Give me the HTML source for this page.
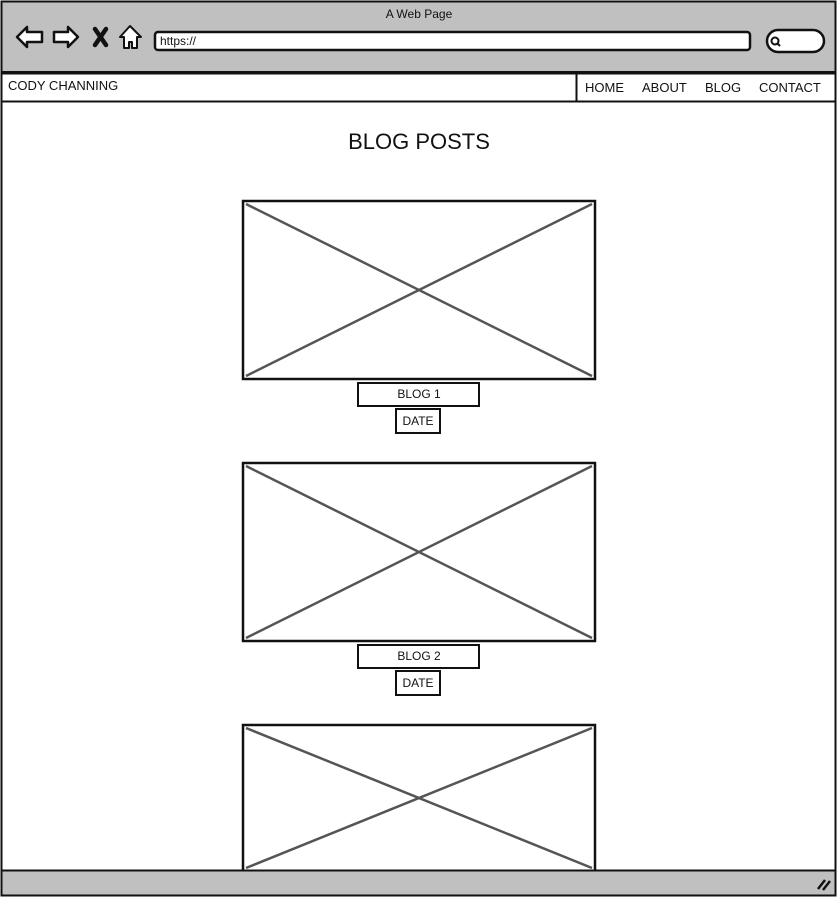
<!DOCTYPE html>
<html><head><style>
body{margin:0;width:838px;height:898px;background:#fff;overflow:hidden;font-family:"Liberation Sans",sans-serif;}
svg{position:absolute;left:0;top:0}
text{font-family:"Liberation Sans",sans-serif;fill:#111}
</style></head><body>
<svg width="838" height="898" viewBox="0 0 838 898">
<rect x="1.5" y="1.5" width="834" height="894" fill="#fff" stroke="#111" stroke-width="2"/>
<rect x="2" y="2" width="833" height="70" fill="#c0c0c0"/>
<line x1="1" y1="72" x2="836" y2="72" stroke="#111" stroke-width="2"/>
<text x="419" y="18" font-size="12" text-anchor="middle">A Web Page</text>
<path d="M17 37 L27 27 L27 32 L42 32 L42 42 L27 42 L27 47 Z" fill="#fff" stroke="#111" stroke-width="2.5" stroke-linejoin="round"/>
<path d="M78 37 L68 27 L68 32 L54 32 L54 42 L68 42 L68 47 Z" fill="#fff" stroke="#111" stroke-width="2.5" stroke-linejoin="round"/>
<path d="M95 29 L106 45 M106 29 L95 45" stroke="#111" stroke-width="4.5" stroke-linecap="round"/>
<path d="M130 26 L120 37 L124 37 L124 48 L129 48 L129 42 L132 42 L132 48 L137 48 L137 37 L141 37 Z" fill="#fff" stroke="#111" stroke-width="2" stroke-linejoin="round"/>
<rect x="155" y="32" width="595" height="18" rx="3" fill="#fff" stroke="#111" stroke-width="2.5"/>
<text x="160" y="45" font-size="12">https://</text>
<rect x="767" y="30" width="57" height="22" rx="11" fill="#fff" stroke="#111" stroke-width="2.5"/>
<circle cx="775" cy="41" r="3.5" fill="none" stroke="#111" stroke-width="2"/>
<line x1="777" y1="43" x2="780" y2="46" stroke="#111" stroke-width="2"/>
<rect x="1.5" y="73.5" width="575" height="28" fill="#fff" stroke="#111" stroke-width="2"/>
<rect x="576.5" y="73.5" width="259" height="28" fill="#fff" stroke="#111" stroke-width="2"/>
<text x="8" y="90" font-size="13">CODY CHANNING</text>
<text x="585" y="92" font-size="13">HOME</text>
<text x="642" y="92" font-size="13">ABOUT</text>
<text x="705" y="92" font-size="13">BLOG</text>
<text x="759" y="92" font-size="13">CONTACT</text>
<text x="419" y="149" font-size="22" text-anchor="middle">BLOG POSTS</text>
<g stroke-width="2.5" fill="#fff">
<rect x="243" y="201" width="352" height="178" stroke="#111"/>
<path d="M246 204 L592 376 M592 204 L246 376" stroke="#555"/>
<rect x="243" y="463" width="352" height="178" stroke="#111"/>
<path d="M246 466 L592 638 M592 466 L246 638" stroke="#555"/>
<path d="M246 728 L592 868 M592 728 L246 868" stroke="#555"/>
<rect x="243" y="725" width="352" height="146" stroke="#111" fill="none"/>
</g>
<g fill="#fff" stroke="#111" stroke-width="2">
<rect x="358" y="383" width="121" height="23"/>
<rect x="396" y="409" width="44" height="24"/>
<rect x="358" y="645" width="121" height="23"/>
<rect x="396" y="671" width="44" height="24"/>
</g>
<text x="419" y="398" font-size="12" text-anchor="middle">BLOG 1</text>
<text x="418" y="425" font-size="12" text-anchor="middle">DATE</text>
<text x="419" y="660" font-size="12" text-anchor="middle">BLOG 2</text>
<text x="418" y="687" font-size="12" text-anchor="middle">DATE</text>
<rect x="2" y="871" width="833" height="24" fill="#c0c0c0"/>
<line x1="1" y1="870.5" x2="836" y2="870.5" stroke="#111" stroke-width="2"/>
<rect x="1.5" y="1.5" width="834" height="894" fill="none" stroke="#111" stroke-width="2"/>
<path d="M818 889 L825 880 M823 890 L830 881" stroke="#111" stroke-width="2.5"/>
</svg>
</body></html>
